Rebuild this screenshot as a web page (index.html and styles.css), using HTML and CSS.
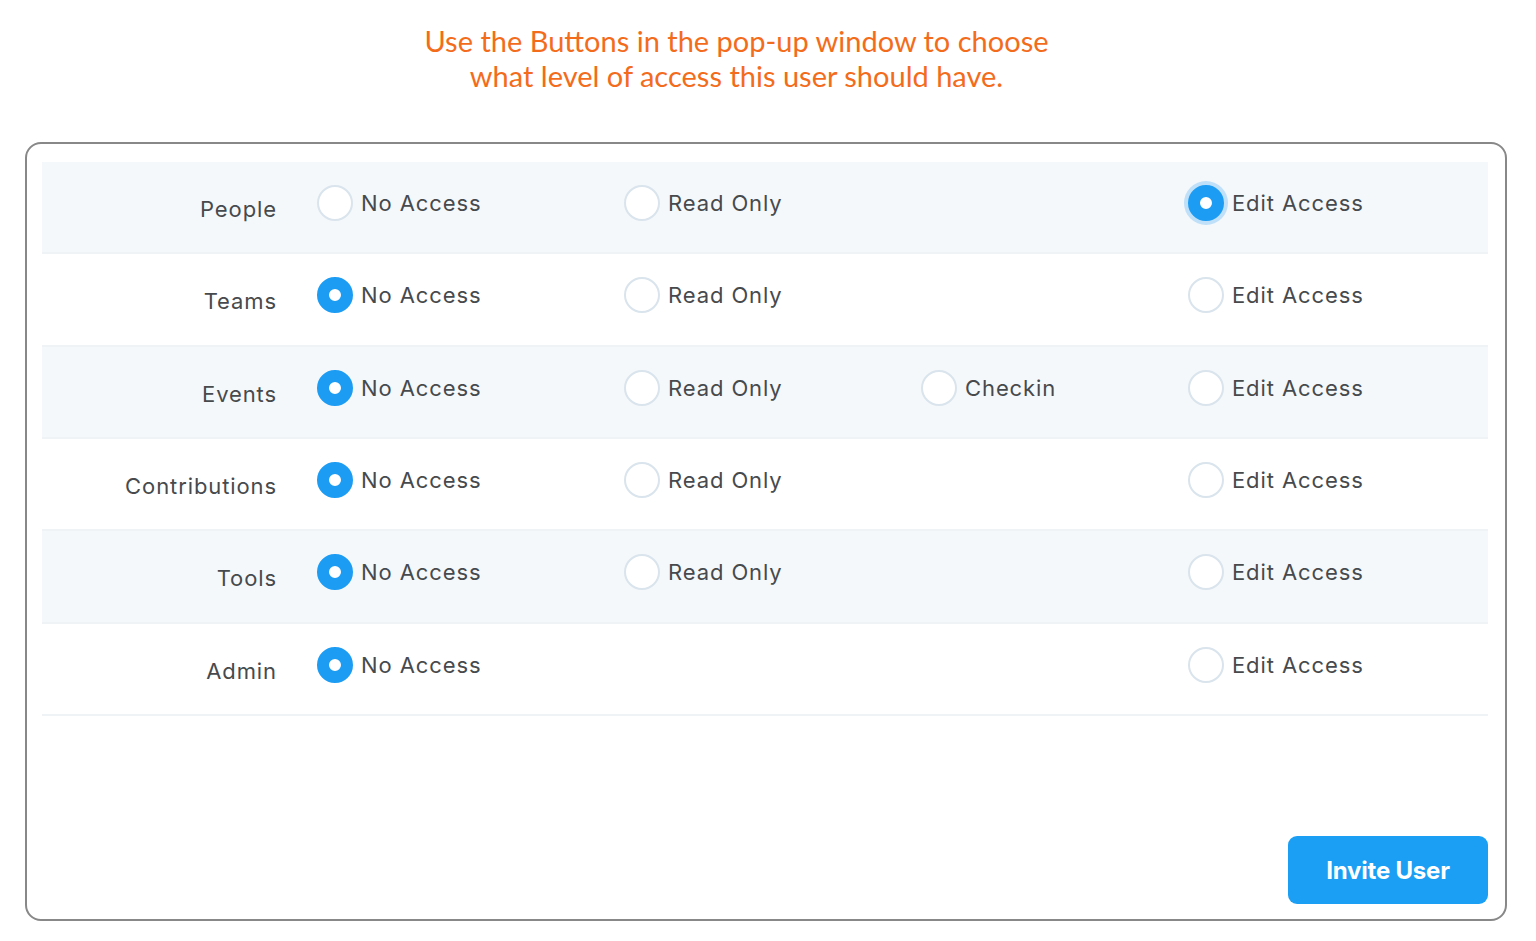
FILE: index.html
```html
<!DOCTYPE html>
<html>
<head>
<meta charset="utf-8">
<link rel="stylesheet" href="styles.css">
</head>
<body>
<div class="title">Use the Buttons in the pop-up window to choose<br>what level of access this user should have.</div>
<div class="panel">
  <div class="rows">
    <div class="row alt">
      <div class="label">People</div>
      <div class="opt"><span class="radio"></span>No Access</div>
      <div class="opt"><span class="radio"></span>Read Only</div>
      <div class="opt"></div>
      <div class="opt"><span class="radio on focus"></span>Edit Access</div>
    </div>
    <div class="row">
      <div class="label">Teams</div>
      <div class="opt"><span class="radio on"></span>No Access</div>
      <div class="opt"><span class="radio"></span>Read Only</div>
      <div class="opt"></div>
      <div class="opt"><span class="radio"></span>Edit Access</div>
    </div>
    <div class="row alt">
      <div class="label">Events</div>
      <div class="opt"><span class="radio on"></span>No Access</div>
      <div class="opt"><span class="radio"></span>Read Only</div>
      <div class="opt"><span class="radio"></span>Checkin</div>
      <div class="opt"><span class="radio"></span>Edit Access</div>
    </div>
    <div class="row">
      <div class="label">Contributions</div>
      <div class="opt"><span class="radio on"></span>No Access</div>
      <div class="opt"><span class="radio"></span>Read Only</div>
      <div class="opt"></div>
      <div class="opt"><span class="radio"></span>Edit Access</div>
    </div>
    <div class="row alt">
      <div class="label">Tools</div>
      <div class="opt"><span class="radio on"></span>No Access</div>
      <div class="opt"><span class="radio"></span>Read Only</div>
      <div class="opt"></div>
      <div class="opt"><span class="radio"></span>Edit Access</div>
    </div>
    <div class="row">
      <div class="label">Admin</div>
      <div class="opt"><span class="radio on"></span>No Access</div>
      <div class="opt"></div>
      <div class="opt"></div>
      <div class="opt"><span class="radio"></span>Edit Access</div>
    </div>
  </div>
  <div class="footer">
    <button class="invite">Invite User</button>
  </div>
</div>
</body>
</html>
```
FILE: styles.css
```css
html, body {
  margin: 0;
  padding: 0;
  background: #ffffff;
}
body {
  font-family: Inter, "Noto Sans", sans-serif;
}
.title {
  font-family: Lato, "Noto Sans", sans-serif;
  color: #f36c1c;
  font-size: 29px;
  line-height: 35px;
  text-align: center;
  width: 1473px;
  box-sizing: border-box;
  padding-top: 23px;
  height: 142px;
}
.panel {
  margin-left: 25px;
  width: 1482px;
  height: 779px;
  border: 2px solid #888888;
  border-radius: 16px;
  padding: 18px 17px 15px 15px;
  box-sizing: border-box;
  display: flex;
  flex-direction: column;
}
.rows {
  display: flex;
  flex-direction: column;
  flex: 1;
}
.row {
  height: 92.33px;
  display: grid;
  grid-template-columns: 275px 307px 297px 267px 1fr;
  align-items: center;
  border-bottom: 2px solid #f0f3f6;
  box-sizing: border-box;
  color: #474a4d;
}
.row.alt {
  background: #f5f8fb;
}
.label {
  font-size: 22px;
  letter-spacing: 0.9px;
  text-align: right;
  padding-right: 40px;
  padding-top: 4px;
}
.opt {
  display: flex;
  align-items: center;
  font-size: 22px;
  letter-spacing: 0.9px;
  margin-top: -8px;
  height: 36px;
}
.radio {
  width: 36px;
  height: 36px;
  box-sizing: border-box;
  border: 2px solid #d9e4ec;
  border-radius: 50%;
  margin-right: 8px;
  background: #fff;
  flex: none;
}
.radio.on {
  border: 12px solid #1c9cf3;
  background: #fff;
}
.radio.focus {
  box-shadow: 0 0 0 4px #bfe0f8;
}
.footer {
  display: flex;
  justify-content: flex-end;
}
.invite {
  width: 200px;
  height: 68px;
  border: none;
  border-radius: 9px;
  background: #1a9ff5;
  color: #ffffff;
  font-family: Inter, "Noto Sans", sans-serif;
  font-weight: 700;
  font-size: 24px;
  letter-spacing: -0.2px;
}
```
